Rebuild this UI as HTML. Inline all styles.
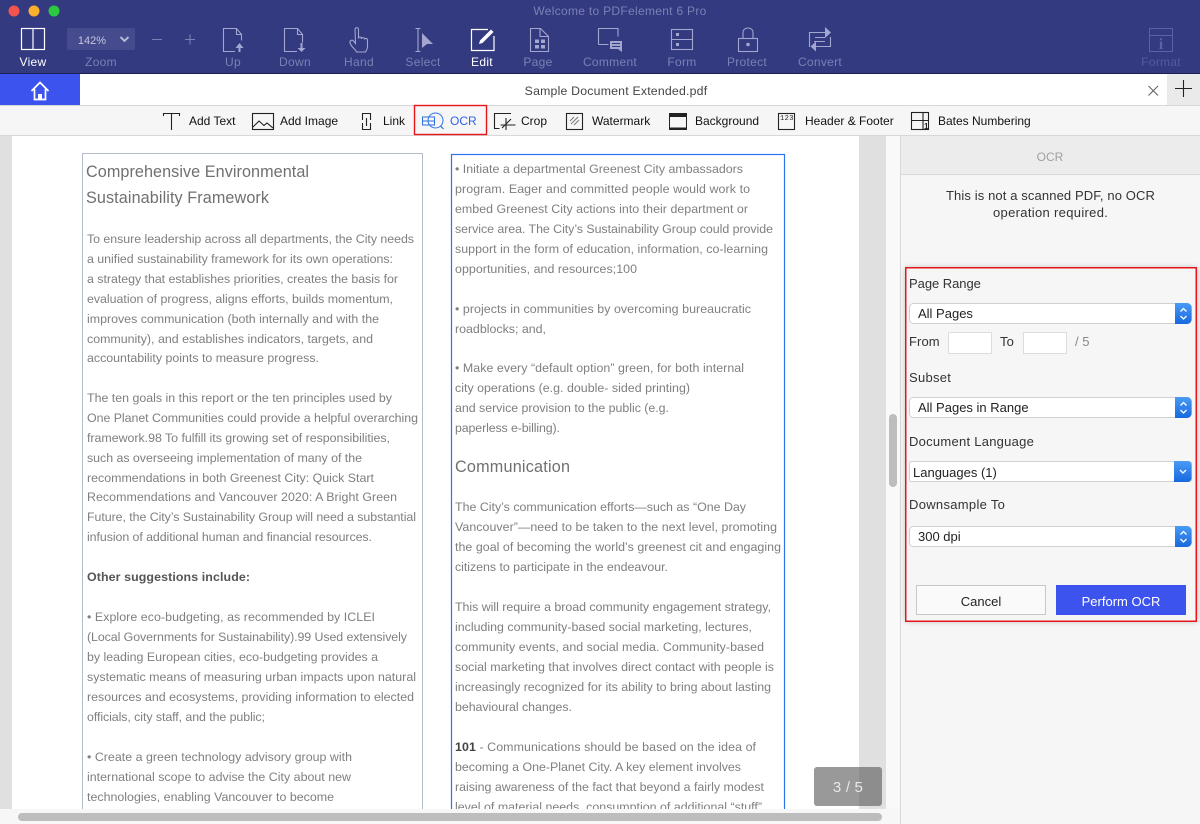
<!DOCTYPE html>
<html><head><meta charset="utf-8"><title>PDFelement</title>
<style>
html,body{margin:0;padding:0;width:1200px;height:824px;overflow:hidden;background:#f6f6f6}
svg{display:block;font-family:"Liberation Sans",sans-serif}
.tb{font-size:12px;fill:#7b80b4;text-anchor:middle;letter-spacing:.3px}
.tw{font-size:12px;fill:#fff;text-anchor:middle;letter-spacing:.3px}
.i{fill:none;stroke:#a3a6cf;stroke-width:1.1}
.w{fill:none;stroke:#fff;stroke-width:1.2}
.s{font-size:12px;fill:#111}
.k{fill:none;stroke:#222;stroke-width:1.1}
.d{font-size:12.4px;fill:#7f7f7f}
.h{font-size:16.2px;fill:#707070}
.p{font-size:13px;fill:#333;letter-spacing:.1px}
.v{font-size:13px;fill:#222}
</style></head><body>
<svg width="1200" height="824" viewBox="0 0 1200 824" xmlns="http://www.w3.org/2000/svg">
<defs>
<linearGradient id="b" x1="0" y1="0" x2="0" y2="1"><stop offset="0" stop-color="#4a9bf5"/><stop offset="1" stop-color="#1668e0"/></linearGradient>
<clipPath id="pg"><rect x="12" y="136" width="847" height="673"/></clipPath>
<filter id="sh" x="-5%" y="-5%" width="110%" height="110%"><feDropShadow dx="0" dy="0" stdDeviation="3" flood-color="#000" flood-opacity=".3"/></filter>
</defs>

<!-- title bar / toolbar -->
<rect width="1200" height="73" fill="#333a80"/>
<rect y="73" width="1200" height="1" fill="#1b2058"/>
<circle cx="14" cy="11" r="5.500" fill="#f5544e"/><circle cx="34" cy="11" r="5.500" fill="#fbb02d"/><circle cx="54" cy="11" r="5.500" fill="#2cc840"/>
<text x="620" y="15" font-size="12" fill="#7b80b4" text-anchor="middle" letter-spacing=".3">Welcome to PDFelement 6 Pro</text>

<rect class="w" x="21.500" y="28.500" width="23" height="21"/><path class="w" d="M33 28v22"/>
<text class="tw" x="33" y="66">View</text>

<rect x="67" y="28" width="68" height="22" rx="2" fill="#454b8d"/>
<text x="92" y="44" font-size="11" fill="#c5c7e0" text-anchor="middle">142%</text>
<path d="M120.500 37l4 4 4-4" fill="none" stroke="#b6b9d8" stroke-width="2"/>
<text class="tb" x="101" y="66">Zoom</text>
<path d="M152 39.500h10M185 39.500h10M190 34.500v10" fill="none" stroke="#7b80b4" stroke-width="1.100"/>

<path class="i" d="M235 51.500h-11.500v-23h13l5 6v6M236.500 28.500v6h5.500"/>
<path d="M239.500 43l4 5h-3v4h-2v-4h-3z" fill="#a3a6cf"/>
<text class="tb" x="233" y="66">Up</text>

<path class="i" d="M297 51.500h-12.500v-23h13l5 6v8M297.500 28.500v6h5"/>
<path d="M301.500 52l-4-4h3v-5h2v5h3z" fill="#a3a6cf"/>
<text class="tb" x="295" y="66">Down</text>

<path class="i" d="M355 29.500c0-2.500 3.500-2.500 3.500 0v9c0-2 3-2 3 .5 0-2 3-1.800 3 .5 .2-1.800 3-1.500 3 .8v6c0 2.500-1 4-2 5.700h-9c-1-3-6-5.500-6.500-9.500-.2-2.500 2.500-2.800 3.500-1.500l2 2.500z"/>
<text class="tb" x="359" y="66">Hand</text>

<path class="i" d="M415.500 28.500h5M415.500 51.500h5M418 28.500v23"/>
<path d="M422 33l11 11h-6l-5 4z" fill="#a3a6cf"/>
<text class="tb" x="423" y="66">Select</text>

<path class="w" d="M488 29.500h-16.500v21h22.500V36"/>
<path d="M479 44l1-3.500L491 29.500l2.500 2.500L482.500 43z" fill="#fff"/>
<text class="tw" x="482" y="66">Edit</text>

<path class="i" d="M530.500 28.500h10l8 8v15h-18zM540 28.500v8h8.500"/>
<path d="M535 39.500h4v3.500h-4zM541 39.500h4v3.500h-4zM535 45h4v3.500h-4zM541 45h4v3.500h-4z" fill="#a3a6cf"/>
<text class="tb" x="538" y="66">Page</text>

<path class="i" d="M598.500 44.500V28.500h19.500v8M598.500 44.500h10"/>
<path d="M610 41h12v11l-4-3h-8z" fill="#a3a6cf"/>
<path d="M612 43.500h8M612 46.500h8" stroke="#333a80" stroke-width="1"/>
<text class="tb" x="610" y="66">Comment</text>

<rect class="i" x="671.500" y="29.500" width="21" height="20"/><path class="i" d="M671.500 39.500h21"/>
<rect x="676" y="33" width="3" height="3" fill="#a3a6cf"/><rect x="676" y="43" width="3" height="3" fill="#a3a6cf"/>
<text class="tb" x="682" y="66">Form</text>

<rect class="i" x="738.500" y="38.500" width="19" height="13"/><path class="i" d="M743 38.500v-6c0-6 10-6 10 0v6"/>
<circle cx="748" cy="44.500" r="1.800" fill="#a3a6cf"/>
<text class="tb" x="747" y="66">Protect</text>

<path class="i" d="M825 32.500H809.500V47M816 46.500h14.500V37M815 37.500h10M814 41.500h11"/>
<path d="M825 27l6 5.500-6 5.500zM816 41.500l-5.500 5 5.500 5z" fill="#a3a6cf"/>
<text class="tb" x="820" y="66">Convert</text>

<rect x="1149.500" y="28.500" width="23" height="23" fill="none" stroke="#5d62a3" stroke-width="1"/><path d="M1149.500 35.500h23" stroke="#5d62a3"/>
<text x="1161" y="49" font-size="16" font-weight="bold" fill="#5d62a3" text-anchor="middle" font-family="Liberation Serif">i</text>
<text x="1161" y="66" font-size="12" fill="#565b9c" text-anchor="middle" letter-spacing=".3">Format</text>

<!-- tab bar -->
<rect y="74" width="1200" height="32" fill="#fff"/>
<rect y="74" width="80" height="32" fill="#3c53ee"/>
<path d="M31.500 91l8.500-8.500 8.500 8.500M34.500 89v10.500h11V89" fill="none" stroke="#fff" stroke-width="1.700"/>
<rect x="38" y="94" width="4" height="6" fill="#fff"/>
<text x="616" y="95" font-size="12.300" fill="#444" text-anchor="middle" letter-spacing=".2">Sample Document Extended.pdf</text>
<path d="M1148.500 86l9.500 9.500M1158 86l-9.500 9.500" stroke="#666" stroke-width="1.100"/>
<rect x="1167" y="74" width="33" height="32" fill="#eaeaea"/>
<path d="M1175 88.500h17M1183.500 80v17" stroke="#222" stroke-width="1.100"/>
<rect y="105" width="1200" height="1" fill="#d6d6d6"/>

<!-- secondary toolbar -->
<rect y="106" width="1200" height="30" fill="#f6f6f6"/>
<rect y="135" width="1200" height="1" fill="#d8d8d8"/>
<path class="k" d="M163.500 116v-2.500h16v2.500M171.500 113.500v16.500"/>
<text class="s" x="189" y="125">Add Text</text>
<rect class="k" x="252.500" y="113.500" width="21" height="16"/><path class="k" d="M253 127l6-6 5 4.500 3-2.500 6 5"/>
<text class="s" x="280" y="125">Add Image</text>
<path class="k" d="M362.500 120v-6.500h8v6.500M362.500 123v6.500h8V123M366.500 118v8"/>
<text class="s" x="383" y="125">Link</text>
<rect x="414.500" y="105.500" width="72" height="29" fill="#f6f6f6" stroke="#e8161b" stroke-width="1.400"/>
<path d="M422.500 117h12v8h-12zM422.500 121h12" fill="none" stroke="#2f6fe0" stroke-width="1"/>
<circle cx="435.500" cy="120.500" r="7.500" fill="none" stroke="#2f6fe0" stroke-width="1"/><path d="M440.500 126l3 3" stroke="#2f6fe0" stroke-width="1.200"/>
<text x="450" y="125" font-size="12" fill="#2f62e8">OCR</text>
<path class="k" d="M511 113.500H494.500V128.500h5M506 118v12M500.500 125h15M502 128l9-9"/>
<text class="s" x="521" y="125">Crop</text>
<rect class="k" x="566.500" y="113.500" width="16" height="16"/><path d="M571 124l7-7M574 125l5-5M570 121l4-4" stroke="#777" fill="none"/>
<text class="s" x="592" y="125">Watermark</text>
<rect x="669" y="113" width="18" height="17" fill="#222"/><rect x="670" y="117" width="16" height="10.500" fill="#f6f6f6"/>
<text class="s" x="695" y="125">Background</text>
<rect class="k" x="778.500" y="113.500" width="16" height="16"/>
<text x="780" y="120" font-size="7" fill="#222" font-family="Liberation Mono" letter-spacing=".4">123</text>
<text class="s" x="805" y="125">Header &amp; Footer</text>
<rect class="k" x="911.500" y="112.500" width="17" height="17"/><path class="k" d="M912 120.500h16M923 112.500v17"/>
<text x="924" y="129" font-size="8" font-weight="bold" fill="#222">1</text>
<text class="s" x="938" y="125">Bates Numbering</text>

<!-- doc area -->
<rect x="0" y="136" width="12" height="673" fill="#e0e0e0"/>
<rect x="12" y="136" width="847" height="673" fill="#fff"/>
<rect x="859" y="136" width="27" height="673" fill="#e0e0e0"/>
<rect x="886" y="136" width="14" height="688" fill="#f9f9f9"/>
<rect x="889" y="414" width="8" height="73" rx="4" fill="#bdbdbd"/>
<rect x="0" y="809" width="900" height="15" fill="#f7f7f7"/>
<rect x="18" y="813" width="864" height="8" rx="4" fill="#bdbdbd"/>

<g clip-path="url(#pg)">
<rect x="82.500" y="153.500" width="340" height="670" fill="none" stroke="#b4bccb"/>
<rect x="451.500" y="154.500" width="333" height="670" fill="none" stroke="#2f72f0" stroke-width="1.200"/>
<text class="h" x="86" y="177" textLength="223">Comprehensive Environmental</text>
<text class="h" x="86" y="203" textLength="183">Sustainability Framework</text>
<g class="d">
<text x="87" y="243" textLength="327">To ensure leadership across all departments, the City needs</text>
<text x="87" y="263" textLength="306">a unified sustainability framework for its own operations:</text>
<text x="87" y="283" textLength="311">a strategy that establishes priorities, creates the basis for</text>
<text x="87" y="303" textLength="306">evaluation of progress, aligns efforts, builds momentum,</text>
<text x="87" y="323" textLength="292">improves communication (both internally and with the</text>
<text x="87" y="343" textLength="286">community), and establishes indicators, targets, and</text>
<text x="87" y="362" textLength="232">accountability points to measure progress.</text>
<text x="87" y="402" textLength="305">The ten goals in this report or the ten principles used by</text>
<text x="87" y="422" textLength="331">One Planet Communities could provide a helpful overarching</text>
<text x="87" y="442" textLength="303">framework.98 To fulfill its growing set of responsibilities,</text>
<text x="87" y="462" textLength="275">such as overseeing implementation of many of the</text>
<text x="87" y="482" textLength="287">recommendations in both Greenest City: Quick Start</text>
<text x="87" y="501" textLength="310">Recommendations and Vancouver 2020: A Bright Green</text>
<text x="87" y="521" textLength="329">Future, the City’s Sustainability Group will need a substantial</text>
<text x="87" y="541" textLength="285">infusion of additional human and financial resources.</text>
<text x="87" y="581" font-weight="bold" fill="#555" textLength="163">Other suggestions include:</text>
<text x="87" y="621" textLength="288">• Explore eco-budgeting, as recommended by ICLEI</text>
<text x="87" y="641" textLength="320">(Local Governments for Sustainability).99 Used extensively</text>
<text x="87" y="661" textLength="291">by leading European cities, eco-budgeting provides a</text>
<text x="87" y="681" textLength="329">systematic means of measuring urban impacts upon natural</text>
<text x="87" y="701" textLength="327">resources and ecosystems, providing information to elected</text>
<text x="87" y="721" textLength="178">officials, city staff, and the public;</text>
<text x="87" y="761" textLength="265">• Create a green technology advisory group with</text>
<text x="87" y="781" textLength="264">international scope to advise the City about new</text>
<text x="87" y="801" textLength="247">technologies, enabling Vancouver to become</text>
</g>
<g class="d">
<text x="455" y="173" textLength="288">• Initiate a departmental Greenest City ambassadors</text>
<text x="455" y="193" textLength="295">program. Eager and committed people would work to</text>
<text x="455" y="213" textLength="293">embed Greenest City actions into their department or</text>
<text x="455" y="233" textLength="318">service area. The City’s Sustainability Group could provide</text>
<text x="455" y="253" textLength="313">support in the form of education, information, co-learning</text>
<text x="455" y="273" textLength="182">opportunities, and resources;100</text>
<text x="455" y="313" textLength="296">• projects in communities by overcoming bureaucratic</text>
<text x="455" y="333" textLength="91">roadblocks; and,</text>
<text x="455" y="372" textLength="289">• Make every “default option” green, for both internal</text>
<text x="455" y="392" textLength="235">city operations (e.g. double- sided printing)</text>
<text x="455" y="412" textLength="214">and service provision to the public (e.g.</text>
<text x="455" y="432" textLength="105">paperless e-billing).</text>
<text x="455" y="472" font-size="16.200" fill="#707070" textLength="115">Communication</text>
<text x="455" y="511" textLength="291">The City’s communication efforts—such as “One Day</text>
<text x="455" y="531" textLength="322">Vancouver”—need to be taken to the next level, promoting</text>
<text x="455" y="551" textLength="326">the goal of becoming the world’s greenest cit and engaging</text>
<text x="455" y="571" textLength="213">citizens to participate in the endeavour.</text>
<text x="455" y="611" textLength="316">This will require a broad community engagement strategy,</text>
<text x="455" y="631" textLength="297">including community-based social marketing, lectures,</text>
<text x="455" y="651" textLength="309">community events, and social media. Community-based</text>
<text x="455" y="671" textLength="319">social marketing that involves direct contact with people is</text>
<text x="455" y="691" textLength="316">increasingly recognized for its ability to bring about lasting</text>
<text x="455" y="711" textLength="117">behavioural changes.</text>
<text x="455" y="751" textLength="301"><tspan font-weight="bold" fill="#444">101</tspan> - Communications should be based on the idea of</text>
<text x="455" y="771" textLength="286">becoming a One-Planet City. A key element involves</text>
<text x="455" y="791" textLength="309">raising awareness of the fact that beyond a fairly modest</text>
<text x="455" y="811" textLength="307">level of material needs, consumption of additional “stuff”</text>
</g>
</g>

<rect x="814" y="767" width="68" height="39" rx="3" fill="#555" fill-opacity=".6"/>
<text x="848" y="792" font-size="15" fill="#e8e8e8" text-anchor="middle" letter-spacing=".2">3 / 5</text>

<!-- right panel -->
<rect x="900" y="136" width="300" height="688" fill="#f6f6f6"/>
<rect x="900" y="136" width="1" height="688" fill="#d8d8d8"/>
<rect x="901" y="136" width="299" height="39" fill="#ececec"/>
<rect x="901" y="174" width="299" height="1" fill="#d8d8d8"/>
<text x="1050" y="161" font-size="12" fill="#a0a0a0" text-anchor="middle">OCR</text>
<text x="946" y="200" class="p" textLength="209">This is not a scanned PDF, no OCR</text>
<text x="993" y="217" class="p" textLength="115">operation required.</text>

<rect x="906" y="268" width="291" height="353" fill="#f6f6f6" filter="url(#sh)"/>
<rect x="905" y="267" width="292" height="1.500" fill="#e8161b"/>
<rect x="905" y="620.500" width="292" height="1.500" fill="#e8161b"/>
<rect x="905" y="267" width="1.500" height="355" fill="#e8161b"/>
<rect x="1195.500" y="267" width="1.500" height="355" fill="#e8161b"/>

<text class="p" x="909" y="288" textLength="72">Page Range</text>
<rect x="909.500" y="303.500" width="282" height="20" rx="4" fill="#fff" stroke="#d0d0d0"/>
<path d="M1175 303h12a4.500 4.500 0 0 1 4.500 4.500v12a4.500 4.500 0 0 1-4.500 4.500h-12z" fill="url(#b)"/>
<path d="M1180.500 311.500l3-3 3 3M1180.500 316l3 3 3-3" fill="none" stroke="#fff" stroke-width="1.300"/>
<text class="v" x="918" y="318">All Pages</text>
<text class="p" x="909" y="346">From</text>
<rect x="948.500" y="332.500" width="43" height="21" fill="#fff" stroke="#ddd"/>
<text class="p" x="1000" y="346">To</text>
<rect x="1023.500" y="332.500" width="43" height="21" fill="#fff" stroke="#ddd"/>
<text x="1075" y="346" font-size="13" fill="#888">/ 5</text>

<text class="p" x="909" y="382" textLength="42">Subset</text>
<rect x="909.500" y="397.500" width="282" height="20" rx="4" fill="#fff" stroke="#d0d0d0"/>
<path d="M1175 397h12a4.500 4.500 0 0 1 4.500 4.500v12a4.500 4.500 0 0 1-4.500 4.500h-12z" fill="url(#b)"/>
<path d="M1180.500 405.500l3-3 3 3M1180.500 410l3 3 3-3" fill="none" stroke="#fff" stroke-width="1.300"/>
<text class="v" x="918" y="412">All Pages in Range</text>

<text class="p" x="909" y="446" textLength="125">Document Language</text>
<rect x="909.500" y="461.500" width="282" height="20" rx="2" fill="#fff" stroke="#d0d0d0"/>
<path d="M1174 461h13.500a4 4 0 0 1 4 4v13a4 4 0 0 1-4 4H1174z" fill="url(#b)"/>
<path d="M1180 470l3 3 3-3" fill="none" stroke="#fff" stroke-width="1.300"/>
<text class="v" x="913" y="477">Languages (1)</text>

<text class="p" x="909" y="509" textLength="96">Downsample To</text>
<rect x="909.500" y="526.500" width="282" height="20" rx="4" fill="#fff" stroke="#d0d0d0"/>
<path d="M1175 526h12a4.500 4.500 0 0 1 4.500 4.500v12a4.500 4.500 0 0 1-4.500 4.500h-12z" fill="url(#b)"/>
<path d="M1180.500 534.500l3-3 3 3M1180.500 539l3 3 3-3" fill="none" stroke="#fff" stroke-width="1.300"/>
<text class="v" x="918" y="541">300 dpi</text>

<rect x="916.500" y="585.500" width="129" height="29" fill="#fafafa" stroke="#c8c8c8"/>
<text x="981" y="606" font-size="13" fill="#222" text-anchor="middle">Cancel</text>
<rect x="1056" y="585" width="130" height="30" fill="#3c53ee"/>
<text x="1121" y="606" font-size="13" fill="#fff" text-anchor="middle">Perform OCR</text>
</svg>
</body></html>
